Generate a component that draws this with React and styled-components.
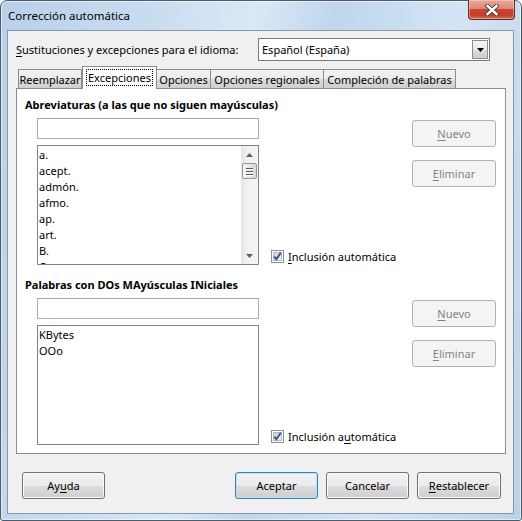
import React from 'react';
import styled, { createGlobalStyle, css } from 'styled-components';

const GlobalStyle = createGlobalStyle`
  html, body {
    margin: 0;
    padding: 0;
    background: #ffffff;
  }
  body {
    font-family: "Noto Sans", "Liberation Sans", sans-serif;
    font-size: 11px;
    color: #000;
  }
`;

// window chrome
const Frame = styled.div`
  width: 522px;
  height: 521px;
  box-sizing: border-box;
  border: 1px solid #4d5b6c;
  border-radius: 7px 7px 3px 3px;
  padding: 0 7px 6px 6px;
  display: flex;
  flex-direction: column;
  background: linear-gradient(100deg, #b8d0ea 0%, #cadcf0 25%, #dbe8f5 42%, #c0d6ed 55%, #d4e4f4 75%, #bcd2ea 100%);
  box-shadow: inset 0 0 0 1px rgba(255, 255, 255, 0.55);
`;

const TitleBar = styled.div`
  height: 29px;
  flex: none;
  display: flex;
  align-items: flex-start;
`;

const Title = styled.div`
  margin: 7px 0 0 1px;
  font-size: 11.5px;
  line-height: 15px;
  color: #000;
`;

const CloseButton = styled.div`
  margin-left: auto;
  margin-right: -1px;
  margin-top: -1px;
  width: 47px;
  height: 20px;
  box-sizing: border-box;
  border: 1px solid #6b2a23;
  border-top: none;
  border-radius: 0 0 4px 4px;
  display: flex;
  align-items: center;
  justify-content: center;
  background: linear-gradient(#e9a99c 0%, #dd8774 45%, #c9452f 50%, #c33f2a 80%, #d4715d 100%);
  box-shadow: inset 0 0 0 1px rgba(255, 220, 210, 0.45);
`;

const Client = styled.div`
  flex: 1;
  box-sizing: border-box;
  border: 1px solid #8399b3;
  background: #f0f0f0;
  display: flex;
  flex-direction: column;
`;

// language row
const LangRow = styled.div`
  display: flex;
  align-items: center;
  padding: 7px 23px 0 8px;
  height: 23px;
`;

const Label = styled.span`
  white-space: nowrap;
`;

const U = styled.span`
  text-decoration: underline;
  text-underline-offset: 2px;
`;

const Combo = styled.div`
  margin-left: auto;
  width: 232px;
  height: 23px;
  box-sizing: border-box;
  border: 1px solid #7a7a7a;
  background: #fff;
  display: flex;
  align-items: center;
  padding: 0 1px 0 3px;
`;

const ComboText = styled.span`
  flex: 1;
`;

const ComboArrow = styled.div`
  width: 16px;
  height: 19px;
  box-sizing: border-box;
  border: 1px solid #8e8f8f;
  background: linear-gradient(#f2f2f2 0%, #ebebeb 50%, #dddddd 51%, #cfcfcf 100%);
  display: flex;
  align-items: center;
  justify-content: center;
`;

// tabs
const TabStrip = styled.div`
  display: flex;
  align-items: flex-end;
  height: 22px;
  margin: 5px 0 0 8px;
  padding-left: 2px;
  position: relative;
  z-index: 1;
`;

const Tab = styled.div`
  box-sizing: border-box;
  width: ${p => p.$w}px;
  height: 19px;
  border: 1px solid #898c95;
  border-bottom: none;
  border-left-width: ${p => (p.$first ? 1 : 0)}px;
  background: linear-gradient(#f2f2f2 0%, #ebebeb 50%, #dddddd 51%, #cfcfcf 100%);
  display: flex;
  align-items: center;
  justify-content: center;
  white-space: nowrap;
  ${p =>
    p.$active &&
    css`
      height: 23px;
      margin-bottom: -1px;
      border-left-width: 1px;
      background: #fff;
      padding-bottom: 2px;
    `}
`;

const Focus = styled.span`
  outline: 1px dotted #000;
  outline-offset: 0;
  padding: 0 1px;
  line-height: 15px;
`;

const Panel = styled.div`
  margin: 0 7px 0 8px;
  height: 366px;
  box-sizing: border-box;
  border: 1px solid #898c95;
  background: #fff;
  padding: 8px 9px 0 8px;
`;

const Section = styled.div`
  margin-top: ${p => p.$top}px;
`;

const Heading = styled.div`
  font-weight: 700;
  line-height: 16px;
  margin-bottom: 5px;
  white-space: nowrap;
`;

const Body = styled.div`
  display: grid;
  grid-template-columns: 222px 1fr 84px;
  column-gap: 12px;
  padding-left: 12px;
`;

const Column = styled.div`
  display: flex;
  flex-direction: column;
  gap: ${p => p.$gap || 0}px;
  padding-top: ${p => p.$pad || 0}px;
  justify-content: ${p => (p.$end ? 'flex-end' : 'flex-start')};
`;

const TextInput = styled.div`
  height: 21px;
  box-sizing: border-box;
  border: 1px solid #abadb3;
  border-top-color: #a3a5ab;
  background: #fff;
`;

const ListBox = styled.div`
  height: 120px;
  box-sizing: border-box;
  border: 1px solid #7f8289;
  background: #fff;
  display: flex;
  overflow: hidden;
`;

const Items = styled.div`
  flex: 1;
  padding: 1px 0 0 1px;
`;

const Item = styled.div`
  line-height: 16px;
  height: 16px;
  white-space: nowrap;
`;

const Scrollbar = styled.div`
  width: 17px;
  flex: none;
  display: flex;
  flex-direction: column;
  background: linear-gradient(to right, #e6e6e6, #f1f1f1 40%, #f4f4f4);
`;

const ScrollArrow = styled.div`
  height: 17px;
  flex: none;
  display: flex;
  align-items: center;
  justify-content: center;
`;

const Thumb = styled.div`
  height: 16px;
  margin: 0 1px;
  box-sizing: border-box;
  border: 1px solid #979797;
  border-radius: 2px;
  background: linear-gradient(to right, #f5f5f5, #e8e8e8 50%, #d9d9d9);
  display: flex;
  flex-direction: column;
  align-items: center;
  justify-content: center;
  gap: 2px;
`;

const Grip = styled.div`
  width: 7px;
  height: 1px;
  background: #5a5a5a;
  box-shadow: 0 1px 0 #ffffff;
`;

const Track = styled.div`
  flex: 1;
`;

const CheckRow = styled.div`
  display: flex;
  align-items: center;
  gap: 4px;
  height: 16px;
  margin-bottom: 1px;
  white-space: nowrap;
`;

const Button = styled.div`
  width: ${p => p.$w || 83}px;
  height: 27px;
  box-sizing: border-box;
  border: 1px solid #707070;
  border-radius: 3px;
  display: flex;
  align-items: center;
  justify-content: center;
  background: linear-gradient(#f2f2f2 0%, #ebebeb 50%, #dddddd 51%, #cfcfcf 100%);
  box-shadow: inset 0 0 0 1px #fbfbfb;
  white-space: nowrap;
  ${p =>
    p.$disabled &&
    css`
      border-color: #adb2b5;
      background: #f4f4f4;
      box-shadow: none;
      color: #838383;
    `}
  ${p =>
    p.$default &&
    css`
      border-color: #3c7fb1;
      box-shadow: inset 0 0 0 1px #b6e3f8;
    `}
`;

const Footer = styled.div`
  display: flex;
  gap: 8px;
  padding: 0 12px 0 14px;
  margin: 18px 0 0;
`;

const Spacer = styled.div`
  flex: 1;
`;

const ArrowUp = () => (
  <svg width="7" height="4" viewBox="0 0 7 4">
    <path d="M0 4 L3.5 0 L7 4 Z" fill="#606060" />
  </svg>
);

const ArrowDown = ({ color = '#606060' }) => (
  <svg width="7" height="4" viewBox="0 0 7 4">
    <path d="M0 0 L7 0 L3.5 4 Z" fill={color} />
  </svg>
);

const CloseGlyph = () => (
  <svg width="14" height="12" viewBox="0 0 14 12">
    <path d="M2.5 2 L11.5 10 M11.5 2 L2.5 10" stroke="#3b3b3b" strokeWidth="4.2" strokeLinecap="square" />
    <path d="M2.5 2 L11.5 10 M11.5 2 L2.5 10" stroke="#ffffff" strokeWidth="2.4" strokeLinecap="square" />
  </svg>
);

const CheckGlyph = () => (
  <svg width="13" height="13" viewBox="0 0 13 13">
    <defs>
      <linearGradient id="cbg" x1="0" y1="0" x2="1" y2="1">
        <stop offset="0" stopColor="#cbcfd5" />
        <stop offset="1" stopColor="#f6f6f6" />
      </linearGradient>
    </defs>
    <rect x="0.5" y="0.5" width="12" height="12" fill="#fff" stroke="#8e8f8f" />
    <rect x="2.5" y="2.5" width="8" height="8" fill="url(#cbg)" stroke="#b4b9c0" />
    <path d="M3.3 6.6 L5.4 9.2 L9.8 2.8" fill="none" stroke="#324f93" strokeWidth="1.9" />
  </svg>
);

const List = ({ items, scroll }) => (
  <ListBox>
    <Items>
      {items.map(t => (
        <Item key={t}>{t}</Item>
      ))}
    </Items>
    {scroll && (
      <Scrollbar>
        <ScrollArrow>
          <ArrowUp />
        </ScrollArrow>
        <Thumb>
          <Grip />
          <Grip />
          <Grip />
        </Thumb>
        <Track />
        <ScrollArrow>
          <ArrowDown />
        </ScrollArrow>
      </Scrollbar>
    )}
  </ListBox>
);

const ExceptionBlock = ({ top, title, items, scroll, checkLabel }) => (
  <Section $top={top}>
    <Heading>{title}</Heading>
    <Body>
      <Column $gap={6}>
        <TextInput />
        <List items={items} scroll={scroll} />
      </Column>
      <Column $end>
        <CheckRow>
          <CheckGlyph />
          <span>{checkLabel}</span>
        </CheckRow>
      </Column>
      <Column $gap={13} $pad={2}>
        <Button $w={84} $disabled>
          <span><U>N</U>uevo</span>
        </Button>
        <Button $w={84} $disabled>
          <span><U>E</U>liminar</span>
        </Button>
      </Column>
    </Body>
  </Section>
);

const tabs = [
  { label: 'Reemplazar', w: 64 },
  { label: 'Excepciones', w: 75, active: true },
  { label: 'Opciones', w: 54 },
  { label: 'Opciones regionales', w: 113 },
  { label: 'Compleción de palabras', w: 132 },
];

const abbreviations = ['a.', 'acept.', 'admón.', 'afmo.', 'ap.', 'art.', 'B.', 'C.'];

export default function App() {
  return (
    <>
      <GlobalStyle />
      <Frame>
        <TitleBar>
          <Title>Corrección automática</Title>
          <CloseButton>
            <CloseGlyph />
          </CloseButton>
        </TitleBar>
        <Client>
          <LangRow>
            <Label>
              <U>S</U>ustituciones y excepciones para el idioma:
            </Label>
            <Combo>
              <ComboText>Español (España)</ComboText>
              <ComboArrow>
                <ArrowDown color="#000" />
              </ComboArrow>
            </Combo>
          </LangRow>

          <TabStrip>
            {tabs.map((t, i) => (
              <Tab key={t.label} $w={t.w} $active={t.active} $first={i === 0}>
                {t.active ? <Focus>{t.label}</Focus> : t.label}
              </Tab>
            ))}
          </TabStrip>

          <Panel>
            <ExceptionBlock
              top={0}
              title="Abreviaturas (a las que no siguen mayúsculas)"
              items={abbreviations}
              scroll
              checkLabel={<><U>I</U>nclusión automática</>}
            />
            <ExceptionBlock
              top={12}
              title="Palabras con DOs MAyúsculas INiciales"
              items={['KBytes', 'OOo']}
              checkLabel={<>Inclusión a<U>u</U>tomática</>}
            />
          </Panel>

          <Footer>
            <Button>
              <span>Ay<U>u</U>da</span>
            </Button>
            <Spacer />
            <Button $default>Aceptar</Button>
            <Button>Cancelar</Button>
            <Button $w={84}>
              <span><U>R</U>establecer</span>
            </Button>
          </Footer>
        </Client>
      </Frame>
    </>
  );
}
